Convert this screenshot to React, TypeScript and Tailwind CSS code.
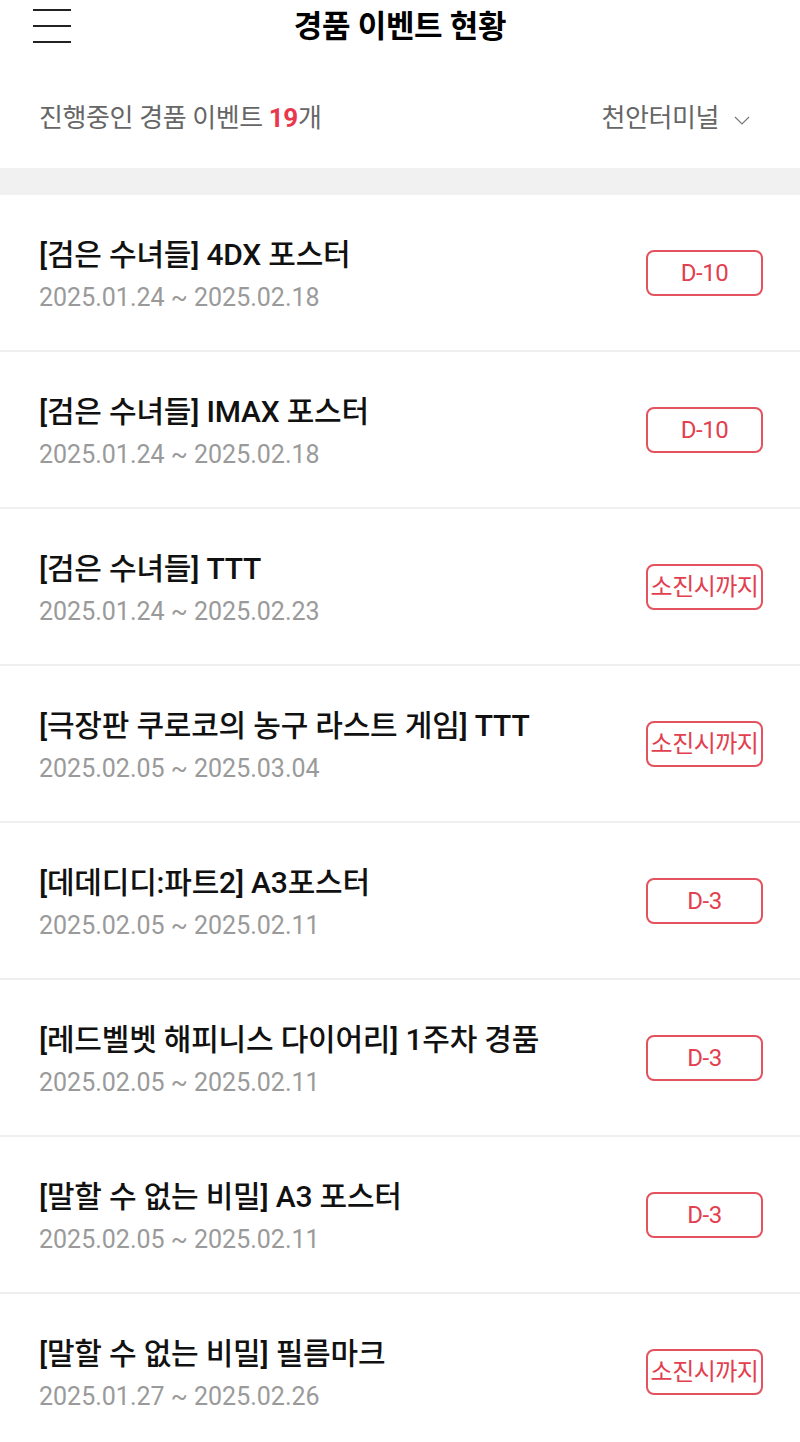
import React from 'react';

const EVENTS = [
  { title: '[검은 수녀들] 4DX 포스터', period: '2025.01.24 ~ 2025.02.18', badge: 'D-10' },
  { title: '[검은 수녀들] IMAX 포스터', period: '2025.01.24 ~ 2025.02.18', badge: 'D-10' },
  { title: '[검은 수녀들] TTT', period: '2025.01.24 ~ 2025.02.23', badge: '소진시까지' },
  { title: '[극장판 쿠로코의 농구 라스트 게임] TTT', period: '2025.02.05 ~ 2025.03.04', badge: '소진시까지' },
  { title: '[데데디디:파트2] A3포스터', period: '2025.02.05 ~ 2025.02.11', badge: 'D-3' },
  { title: '[레드벨벳 해피니스 다이어리] 1주차 경품', period: '2025.02.05 ~ 2025.02.11', badge: 'D-3' },
  { title: '[말할 수 없는 비밀] A3 포스터', period: '2025.02.05 ~ 2025.02.11', badge: 'D-3' },
  { title: '[말할 수 없는 비밀] 필름마크', period: '2025.01.27 ~ 2025.02.26', badge: '소진시까지' },
];

const FONT = "font-['Roboto','Noto_Sans_CJK_KR',sans-serif]";

function Header() {
  return (
    <header className="relative flex items-center justify-center h-[52px]">
      <button className="absolute left-[33px] top-[9px] flex flex-col gap-[14px] w-[38px]">
        <span className="block h-[2px] bg-[#222]" />
        <span className="block h-[2px] bg-[#222]" />
        <span className="block h-[2px] bg-[#222]" />
      </button>
      <h1 className="text-[31px] font-bold tracking-[-0.3px] text-black leading-none">경품 이벤트 현황</h1>
    </header>
  );
}

function Summary() {
  return (
    <div className="flex items-center justify-between h-[116px] pl-[39px] pr-[50px] pt-[16px]">
      <p className="text-[26px] text-[#666] tracking-[-0.4px]">
        진행중인 경품 이벤트 <span className="font-bold text-[#e8384d]">19</span>개
      </p>
      <div className="flex items-center gap-[15px] text-[26px] text-[#666] tracking-[-0.4px]">
        <span>천안터미널</span>
        <svg width="16" height="10" viewBox="0 0 16 10" fill="none" className="mt-[4px]">
          <path d="M1 2l7 7 7-7" stroke="#777" strokeWidth="1.2" />
        </svg>
      </div>
    </div>
  );
}

function EventRow({ title, period, badge }: { title: string; period: string; badge: string }) {
  return (
    <li className="flex items-center justify-between h-[157px] pl-[39px] pr-[37px] border-b-2 border-[#efefef]">
      <div className="flex flex-col pt-[6px]">
        <span className="text-[30px] font-medium text-[#111] leading-[38px] tracking-[-0.2px]">{title}</span>
        <span className="text-[25px] text-[#9a9a9a] leading-[34px] mt-[7px]">{period}</span>
      </div>
      <span className="flex items-center justify-center w-[117px] h-[46px] border-2 border-[#e2525f] rounded-[8px] text-[24px] text-[#e2404f] tracking-[-0.5px] whitespace-nowrap">
        {badge}
      </span>
    </li>
  );
}

export default function App() {
  return (
    <div className={`${FONT} w-[800px] min-h-[1442px] bg-white overflow-hidden`}>
      <Header />
      <Summary />
      <div className="h-[27px] bg-[#f1f1f1]" />
      <ul>
        {EVENTS.map((ev) => (
          <EventRow key={ev.title} {...ev} />
        ))}
      </ul>
    </div>
  );
}
